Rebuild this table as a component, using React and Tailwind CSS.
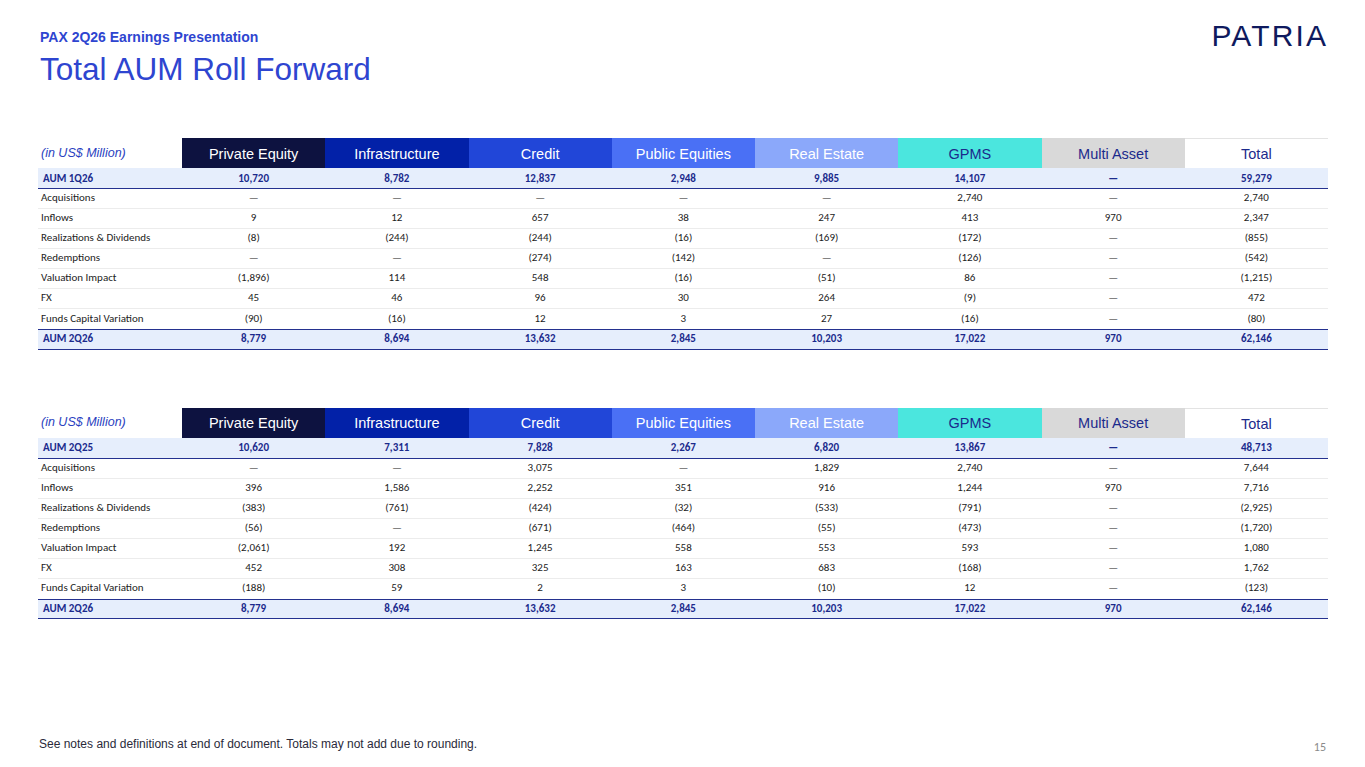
import React from "react";

// --- Data ---

const columns = [
  { name: "Private Equity", cls: "bg-[#0d1240] text-white" },
  { name: "Infrastructure", cls: "bg-[#0221a8] text-white" },
  { name: "Credit", cls: "bg-[#2146d8] text-white" },
  { name: "Public Equities", cls: "bg-[#4a70f5] text-white" },
  { name: "Real Estate", cls: "bg-[#8ba8fa] text-white" },
  { name: "GPMS", cls: "bg-[#4be6de] text-[#1b2a8c]" },
  { name: "Multi Asset", cls: "bg-[#d9d9d9] text-[#1b2a8c]" },
  { name: "Total", cls: "bg-white text-[#1b2a8c] border-t border-[#e3e3e3]" },
];

const D = "—";

const quarter = {
  open: ["AUM 1Q26", "10,720", "8,782", "12,837", "2,948", "9,885", "14,107", D, "59,279"],
  rows: [
    ["Acquisitions", D, D, D, D, D, "2,740", D, "2,740"],
    ["Inflows", "9", "12", "657", "38", "247", "413", "970", "2,347"],
    ["Realizations & Dividends", "(8)", "(244)", "(244)", "(16)", "(169)", "(172)", D, "(855)"],
    ["Redemptions", D, D, "(274)", "(142)", D, "(126)", D, "(542)"],
    ["Valuation Impact", "(1,896)", "114", "548", "(16)", "(51)", "86", D, "(1,215)"],
    ["FX", "45", "46", "96", "30", "264", "(9)", D, "472"],
    ["Funds Capital Variation", "(90)", "(16)", "12", "3", "27", "(16)", D, "(80)"],
  ],
  close: ["AUM 2Q26", "8,779", "8,694", "13,632", "2,845", "10,203", "17,022", "970", "62,146"],
};

const ltm = {
  open: ["AUM 2Q25", "10,620", "7,311", "7,828", "2,267", "6,820", "13,867", D, "48,713"],
  rows: [
    ["Acquisitions", D, D, "3,075", D, "1,829", "2,740", D, "7,644"],
    ["Inflows", "396", "1,586", "2,252", "351", "916", "1,244", "970", "7,716"],
    ["Realizations & Dividends", "(383)", "(761)", "(424)", "(32)", "(533)", "(791)", D, "(2,925)"],
    ["Redemptions", "(56)", D, "(671)", "(464)", "(55)", "(473)", D, "(1,720)"],
    ["Valuation Impact", "(2,061)", "192", "1,245", "558", "553", "593", D, "1,080"],
    ["FX", "452", "308", "325", "163", "683", "(168)", D, "1,762"],
    ["Funds Capital Variation", "(188)", "59", "2", "3", "(10)", "12", D, "(123)"],
  ],
  close: ["AUM 2Q26", "8,779", "8,694", "13,632", "2,845", "10,203", "17,022", "970", "62,146"],
};

const bodyFont = "font-['Carlito','Lato','Liberation_Sans',sans-serif]";
const arial = "font-['Liberation_Sans','Arial',sans-serif]";

// --- Components ---

const Row = ({ cells, total, last }) => (
  <div
    className={`grid grid-cols-[144px_repeat(8,1fr)] items-center text-[11px] ${bodyFont} ${
      total
        ? "h-[18.5px] bg-[#e6eefc] font-bold text-[#1b2a8c]"
        : `h-[20px] text-[#222] ${last ? "" : "border-b border-[#ececec]"}`
    }`}
  >
    {cells.map((c, i) => (
      <div key={i} className={i === 0 ? (total ? "pl-[5px]" : "pl-[3px]") : "text-center"}>
        {c}
      </div>
    ))}
  </div>
);

const RollTable = ({ data }) => (
  <div className="w-[1290px] ml-[38px]">
    <div className={`grid grid-cols-[144px_repeat(8,1fr)] h-[30px] ${arial}`}>
      <div className="flex items-center pl-[3px] italic text-[12.5px] text-[#2a3fc0]">(in US$ Million)</div>
      {columns.map((c) => (
        <div key={c.name} className={`flex items-center justify-center pt-[3px] text-[14.5px] ${c.cls}`}>
          {c.name}
        </div>
      ))}
    </div>
    <div className="bg-[#e6eefc] pt-[1.5px] border-b-[1.5px] border-[#24318f]">
      <Row cells={data.open} total />
    </div>
    {data.rows.map((r, i) => (
      <Row key={r[0]} cells={r} last={i === data.rows.length - 1} />
    ))}
    <div className="border-y-[1.5px] border-[#24318f]">
      <Row cells={data.close} total />
    </div>
  </div>
);

// --- Page ---

export default function App() {
  return (
    <div className="w-[1365px] h-[767px] bg-white flex flex-col overflow-hidden">
      <header className={`flex justify-between items-start pl-[40px] pr-[39px] pt-[29px] ${arial}`}>
        <div>
          <div className="text-[14px] leading-[16px] font-bold text-[#2e45d0]">PAX 2Q26 Earnings Presentation</div>
          <h1 className="mt-[6px] text-[31.5px] leading-[36px] text-[#2e45d0]">Total AUM Roll Forward</h1>
        </div>
        <div className="mt-[-16px] text-[30px] tracking-[0.07em] mr-[-2px] text-[#0f1a5e] font-light">PATRIA</div>
      </header>

      <div className="mt-[51px]">
        <RollTable data={quarter} />
      </div>
      <div className="mt-[58px]">
        <RollTable data={ltm} />
      </div>

      <footer className="mt-auto mb-[14px] flex justify-between items-end pl-[39px] pr-[39px]">
        <div className={`text-[12px] text-[#2a2a3a] ${arial}`}>
          See notes and definitions at end of document. Totals may not add due to rounding.
        </div>
        <div className={`text-[12px] leading-[14px] mb-[-1px] text-[#8a8a8a] ${bodyFont}`}>15</div>
      </footer>
    </div>
  );
}
